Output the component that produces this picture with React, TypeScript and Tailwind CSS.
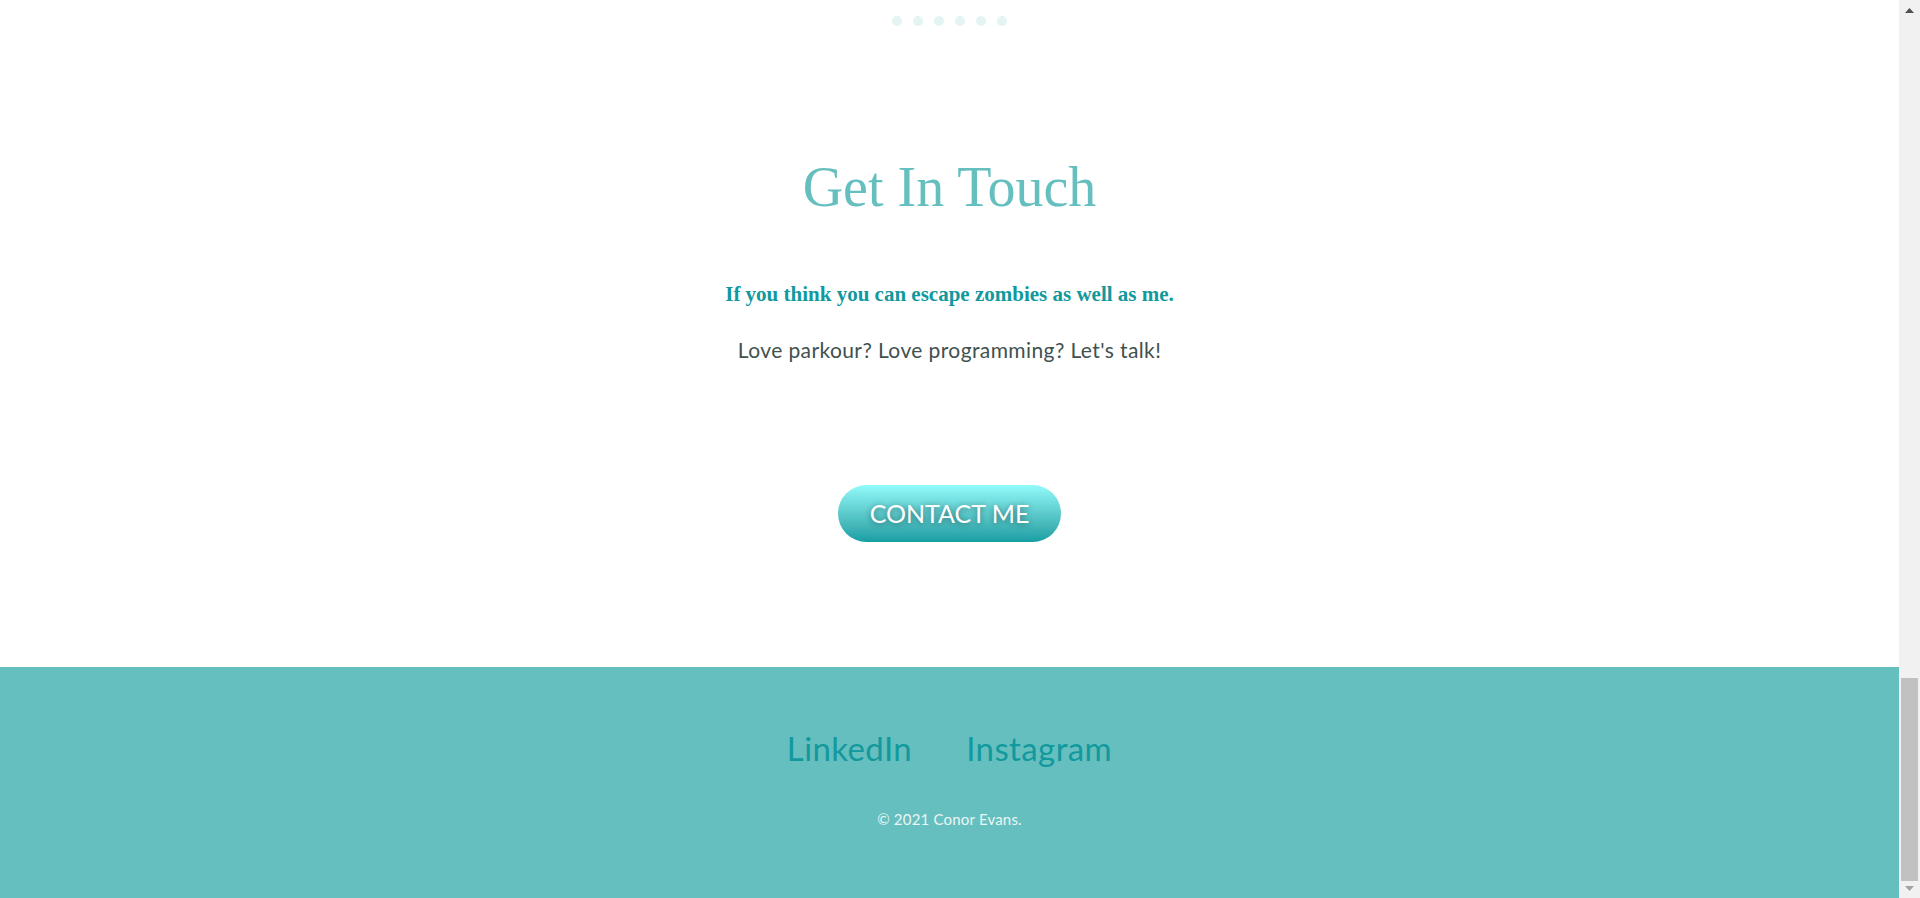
import React from 'react';

const sans = { fontFamily: 'Lato, "Noto Sans", sans-serif' };
const serif = { fontFamily: '"Liberation Serif", "DejaVu Serif", serif' };

const Dots = () => (
  <div className="flex justify-center gap-[11px] pt-4">
    {[0, 1, 2, 3, 4, 5].map((i) => (
      <span key={i} className="block h-[10px] w-[10px] rounded-full bg-[#e4f4f3]" />
    ))}
  </div>
);

const Scrollbar = () => (
  <div className="flex w-[21px] shrink-0 flex-col bg-[#f1f1f1]">
    <div className="flex h-[17px] items-center justify-center pt-[4px]">
      <svg width="9" height="5" viewBox="0 0 9 5">
        <path d="M4.5 0 L9 5 L0 5 Z" fill="#505050" />
      </svg>
    </div>
    <div className="flex flex-1 flex-col justify-end px-[2px]">
      <div className="h-[203px] bg-[#c1c1c1]" />
    </div>
    <div className="flex h-[17px] items-center justify-center pb-[2px]">
      <svg width="9" height="5" viewBox="0 0 9 5">
        <path d="M0 0 L9 0 L4.5 5 Z" fill="#a3a3a3" />
      </svg>
    </div>
  </div>
);

export default function App() {
  return (
    <div className="flex h-[898px] w-full overflow-hidden bg-white">
      <div className="flex flex-1 flex-col">
        {/* contact section */}
        <section className="flex flex-1 flex-col items-center">
          <Dots />
          <h1
            className="mt-[133px] text-[56px] leading-[56px] font-normal text-[#66bfbf]"
            style={serif}
          >
            Get In Touch
          </h1>
          <h2
            className="mt-[65px] text-[21px] leading-[28px] font-bold text-[#11999e]"
            style={serif}
          >
            If you think you can escape zombies as well as me.
          </h2>
          <p
            className="mt-[28px] text-[21px] leading-[28px] tracking-[0.4px] text-[#40514e]"
            style={sans}
          >
            Love parkour? Love programming? Let's talk!
          </p>
          <a
            href="#"
            className="mt-[121px] flex h-[57px] w-[223px] items-center justify-center rounded-full bg-linear-to-b from-[#92fbfb] via-[#5ccacc] to-[#149ea2] text-[25px] text-white [text-shadow:0_1px_6px_rgba(0,0,0,0.45)]"
            style={sans}
          >
            CONTACT ME
          </a>
        </section>

        {/* footer */}
        <footer className="flex h-[231px] shrink-0 flex-col items-center bg-[#66bfbf]" style={sans}>
          <div className="mt-[60px] flex gap-[54px] text-[33px] leading-[42px] tracking-[0.4px] text-[#11999e]">
            <a href="#">LinkedIn</a>
            <a href="#">Instagram</a>
          </div>
          <p className="mt-[40px] text-[15px] leading-[20px] tracking-[0.2px] text-[#eaf6f6]">
            © 2021 Conor Evans.
          </p>
        </footer>
      </div>
      <Scrollbar />
    </div>
  );
}
